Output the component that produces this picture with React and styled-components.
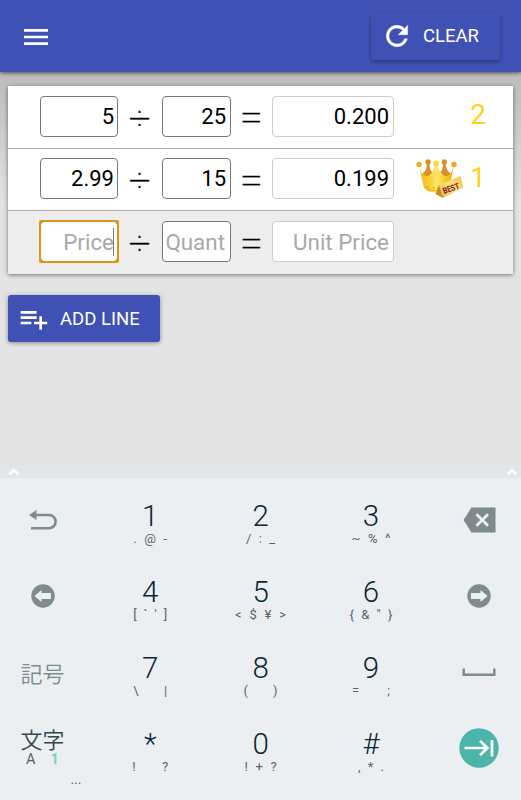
import styled, { createGlobalStyle } from "styled-components";
import { MdMenu } from "react-icons/md";

const lines = [
    { price: "5", quantity: "25", unit: "0.200", rank: "2" },
    { price: "2.99", quantity: "15", unit: "0.199", rank: "1", best: true },
    { empty: true },
];

const keyRows = [
    {
        left: <UndoIcon />,
        keys: [
            { main: "1", sub: [".", "@", "-"], width: 34 },
            { main: "2", sub: ["/", ":", "_"], width: 29 },
            { main: "3", sub: ["~", "%", "^"], width: 39 },
        ],
        right: <BackspaceIcon />,
    },
    {
        left: <ArrowIcon flip />,
        keys: [
            { main: "4", sub: ["[", "`", "'", "]"], width: 34 },
            { main: "5", sub: ["<", "$", "¥", ">"], width: 51 },
            { main: "6", sub: ["{", "&", "\"", "}"], width: 43 },
        ],
        right: <ArrowIcon />,
    },
    {
        left: <SymbolKey />,
        keys: [
            { main: "7", sub: ["\\", "|"], width: 34 },
            { main: "8", sub: ["(", ")"], width: 34 },
            { main: "9", sub: ["=", ";"], width: 38 },
        ],
        right: <SpaceIcon />,
    },
    {
        left: <ModeKey />,
        keys: [
            { main: "*", sub: ["!", "?"], width: 36 },
            { main: "0", sub: ["!", "+", "?"], width: 32 },
            { main: "#", sub: [",", "*", "."], width: 26 },
        ],
        right: <NextIcon />,
    },
];

function App(){
    return (
        <Screen>
            <GlobalStyle />
            <Header>
                <MdMenu size={32} />
                <ClearButton>
                    <RefreshIcon />
                    <span>CLEAR</span>
                </ClearButton>
            </Header>

            <Content>
                <LineCard>
                {
                    lines.map((line, index) => (
                        <LineRow key={index} $empty={line.empty}>
                            <Field $width={78} $placeholder={line.empty} $focus={line.empty}>
                                {line.empty ? "Price" : line.price}
                                {line.empty && <Caret />}
                            </Field>
                            <Divide>÷</Divide>
                            <Field $width={69} $placeholder={line.empty} $right={line.empty ? 5 : 4}>
                                {line.empty ? "Quant" : line.quantity}
                            </Field>
                            <Equal>=</Equal>
                            <Field $width={122} $placeholder={line.empty} $right={4} $result>
                                {line.empty ? "Unit Price" : line.unit}
                            </Field>
                            <RankArea>
                                {line.best && <Crown />}
                                <Rank>{line.rank}</Rank>
                            </RankArea>
                        </LineRow>
                    ))
                }
                </LineCard>
                <AddButton>
                    <AddLineIcon />
                    <span>ADD LINE</span>
                </AddButton>
            </Content>

            <Keyboard>
                <Handle>
                    <Chevron />
                    <Chevron />
                </Handle>
                {
                    keyRows.map((row, index) => (
                        <KeyRow key={index}>
                            <SideKey>{row.left}</SideKey>
                            {row.keys.map((data) => (
                                <Key key={data.main}>
                                    <KeyMain>{data.main}</KeyMain>
                                    <KeySub $width={data.width}>
                                        {data.sub.map((s) => <span key={s}>{s}</span>)}
                                    </KeySub>
                                </Key>
                            ))}
                            <SideKey $right>{row.right}</SideKey>
                        </KeyRow>
                    ))
                }
            </Keyboard>
        </Screen>
    );
}

function RefreshIcon(){
    return (
        <svg width="32" height="32" viewBox="0 0 24 24" fill="currentColor" stroke="currentColor" strokeWidth="0.3">
            <path d="M17.65 6.35A7.958 7.958 0 0 0 12 4c-4.420 0-7.990 3.580-7.990 8s3.570 8 7.990 8c3.730 0 6.840-2.550 7.730-6h-2.080A5.990 5.990 0 0 1 12 18c-3.310 0-6-2.690-6-6s2.690-6 6-6c1.660 0 3.140.69 4.220 1.780L13 11h7V4l-2.350 2.350z" />
        </svg>
    );
}

function AddLineIcon(){
    return (
        <svg width="32" height="32" viewBox="0 0 24 24" fill="currentColor">
            <path d="M14 10H2v2h12v-2zm0-4H2v2h12V6zm4 8v-4h-2v4h-4v2h4v4h2v-4h4v-2h-4zM2 16h8v-2H2v2z" />
        </svg>
    );
}

function Crown(){
    return (
        <svg width="50" height="42" viewBox="0 0 50 42">
            <defs>
                <linearGradient id="gold" x1="0" y1="0" x2="1" y2="0">
                    <stop offset="0" stopColor="#f4b61c" />
                    <stop offset="0.35" stopColor="#fbd338" />
                    <stop offset="0.5" stopColor="#ffe873" />
                    <stop offset="0.7" stopColor="#fcd22c" />
                    <stop offset="1" stopColor="#f0a818" />
                </linearGradient>
                <linearGradient id="tag" x1="0" y1="1" x2="1" y2="0">
                    <stop offset="0" stopColor="#e9b43a" />
                    <stop offset="0.5" stopColor="#f9e28a" />
                    <stop offset="1" stopColor="#f0c03c" />
                </linearGradient>
            </defs>
            <g fill="#da8f28">
                <circle cx="12" cy="4" r="2.7" />
                <circle cx="28.3" cy="4" r="2.7" />
                <path d="M11 5 H13.2 C13.5 10 15 14 18 16 L18 20 L7 20 V15 C10 13 11 9 11 5 Z M27.3 5 H29.4 C30 9 31 13 34 15 V20 H22 V16 C26 14 27 10 27.3 5 Z" />
            </g>
            <path d="M2.8 7 C4 14 7 18 11 18 C15 18 18 12 19 6 H21.5 C22.5 12 26 18 30 18 C34 18 36.5 13 37.8 7 L33.5 31 C29 36 12 36 8 30 Z" fill="url(#gold)" />
            <path d="M8.5 29 C14 34 27 34 33 29" fill="none" stroke="#e5a51c" strokeWidth="0.8" />
            <circle cx="3" cy="6.5" r="2.7" fill="#f0ad1c" />
            <circle cx="20.2" cy="5.5" r="3" fill="#fbdc48" />
            <circle cx="38" cy="6.5" r="2.7" fill="#efa91b" />
            <circle cx="12" cy="29" r="0.8" fill="#d9822b" />
            <circle cx="17.5" cy="30" r="0.8" fill="#d9822b" />
            <path d="M23 27 L19.5 36 L27 40 L29 38 Z" fill="#c98a20" />
            <path d="M23 27 L44.5 18 L47.5 29.5 L27 40 Z" fill="url(#tag)" />
            <text x="28" y="36" transform="rotate(-20 28 36)" fontFamily="Roboto, sans-serif" fontSize="8.5" fontWeight="700" fill="#7c1a16" textLength="17" lengthAdjust="spacingAndGlyphs">BEST</text>
        </svg>
    );
}

function Chevron(){
    return (
        <svg width="12" height="8" viewBox="0 0 12 8">
            <path d="M1.5 6.5 L6 2 L10.5 6.5" fill="none" stroke="#fff" strokeWidth="2.5" />
        </svg>
    );
}

function UndoIcon(){
    return (
        <svg width="28" height="20" viewBox="0 0 28 20">
            <path d="M7 5 H20 A6.6 6.6 0 0 1 20 18.2 H2" fill="none" stroke="#7f8c8e" strokeWidth="2.6" />
            <path d="M0 5 L7.5 0 V10 Z" fill="#7f8c8e" />
        </svg>
    );
}

function BackspaceIcon(){
    return (
        <svg width="33" height="26" viewBox="0 0 33 26">
            <path d="M8.5 0.5 H31.5 Q32.5 0.5 32.5 1.5 V24.5 Q32.5 25.5 31.5 25.5 H8.5 L0.5 13 Z" fill="#7f8a8e" />
            <path d="M13.5 7.3 L25 18.7 M25 7.3 L13.5 18.7" stroke="#ebeff2" strokeWidth="2.8" />
        </svg>
    );
}

function ArrowIcon({ flip }){
    return (
        <svg width="24" height="24" viewBox="0 0 24 24">
            <circle cx="12" cy="12" r="11.7" fill="#7f8c8e" />
            <path d="M4 9 H13.5 V6 L20.5 12 L13.5 18 V15 H4 Z" fill="#ebeff2" transform={flip ? "matrix(-1 0 0 1 24 0)" : undefined} />
        </svg>
    );
}

function SpaceIcon(){
    return (
        <svg width="34" height="9" viewBox="0 0 34 9">
            <path d="M1.7 0.5 V6.7 H32.3 V0.5" fill="none" stroke="#7f8c8e" strokeWidth="2.5" />
        </svg>
    );
}

function NextIcon(){
    return (
        <svg width="40" height="40" viewBox="0 0 40 40">
            <circle cx="20" cy="20" r="19.7" fill="#4bb5aa" />
            <path d="M5.5 20 H28 M21 12.7 L28.5 20 L21 27.3" fill="none" stroke="#fff" strokeWidth="2.6" />
            <path d="M33 12 V28.5" stroke="#fff" strokeWidth="2.8" />
        </svg>
    );
}

function SymbolKey(){
    return <SymbolLabel>記号</SymbolLabel>;
}

function ModeKey(){
    return (
        <ModeWrapper>
            <SymbolLabel $dark>文字</SymbolLabel>
            <ModeRow>
                <span>A</span>
                <ModeActive>1</ModeActive>
            </ModeRow>
            <ModeDots>...</ModeDots>
        </ModeWrapper>
    );
}

const GlobalStyle = createGlobalStyle`
    * {
        box-sizing: border-box;
    }
    body {
        margin: 0;
        font-family: Roboto, "Noto Sans CJK JP", sans-serif;
    }
    svg {
        display: block;
        flex-shrink: 0;
    }
`

const Screen = styled.div`
    width: 521px;
    height: 800px;
    display: flex;
    flex-direction: column;
    background-color: #e3e3e3;
    overflow: hidden;
`;

const Header = styled.div`
    height: 72px;
    flex-shrink: 0;
    padding: 2px 21px 0 20px;
    display: flex;
    align-items: center;
    justify-content: space-between;
    background-color: #3f51b5;
    color: white;
    z-index: 1;
    box-shadow: 0 1px 4px rgba(0, 0, 0, 0.6);
`;

const Button = styled.button`
    display: flex;
    align-items: center;
    height: 47px;
    border: none;
    border-radius: 3px;
    background-color: #3f51b5;
    color: white;
    font-family: inherit;
    font-size: 18.5px;
    font-weight: 400;
`;

const ClearButton = styled(Button)`
    width: 129px;
    padding: 0 0 0 10px;
    gap: 10px;
    margin-top: -2px;
    box-shadow: 0 2px 4px rgba(0, 0, 0, 0.35);
`;

const AddButton = styled(Button)`
    width: 152px;
    margin-top: 21px;
    padding: 0 0 0 10px;
    gap: 10px;
    box-shadow: 0 1px 4px rgba(0, 0, 0, 0.4);
`;

const Content = styled.div`
    height: 393px;
    flex-shrink: 0;
    padding: 14px 8px 0;
    background: linear-gradient(#bdbdbd 0, #c4c4c4 35px, #e3e3e3 130px);
`;

const LineCard = styled.div`
    height: 188px;
    background-color: white;
    border-radius: 2px;
    box-shadow: 0 1px 4px rgba(0, 0, 0, 0.5);
`;

const LineRow = styled.div`
    display: flex;
    align-items: center;
    height: 62.5px;
    padding: 0 27px 1px 32px;
    border-bottom: ${(props) => props.$empty ? "none" : "1px solid #aaa"};
    background-color: ${(props) => props.$empty ? "#ededed" : "white"};
`;

const Field = styled.div`
    position: relative;
    flex-shrink: 0;
    width: ${(props) => props.$width}px;
    height: 41px;
    padding-right: ${(props) => props.$right || 3}px;
    display: flex;
    align-items: center;
    justify-content: flex-end;
    border: 1px solid ${(props) => props.$result ? "#ccc" : "#777"};
    border-radius: 4px;
    background-color: white;
    color: ${(props) => props.$placeholder ? "#a9a9a9" : "black"};
    font-size: ${(props) => props.$placeholder ? 22.4 : 22}px;
    white-space: nowrap;

    &::after {
        content: "";
        display: ${(props) => props.$focus ? "block" : "none"};
        position: absolute;
        inset: -2px;
        border: 2px solid #e09410;
        border-radius: 2px;
    }
`;

const Caret = styled.div`
    position: absolute;
    right: 3px;
    top: 6px;
    width: 1.5px;
    height: 28px;
    background-color: #777;
`;

const Operator = styled.div`
    flex-shrink: 0;
    text-align: center;
    line-height: 40px;
    color: black;
    -webkit-text-stroke: 0.35px black;
`;

const Divide = styled(Operator)`
    width: 44px;
    padding-top: 3px;
    padding-right: 1px;
    font-family: "DejaVu Sans", sans-serif;
    font-size: 30px;
    font-weight: 200;
`;

const Equal = styled(Operator)`
    width: 41px;
    padding-top: 2px;
    font-family: Roboto, sans-serif;
    font-size: 42px;
    font-weight: 100;
`;

const RankArea = styled.div`
    flex: 1;
    display: flex;
    align-items: center;
    justify-content: flex-end;
`;

const Rank = styled.div`
    width: 20px;
    text-align: right;
    font-size: 28px;
    font-weight: 400;
    line-height: 28px;
    padding-bottom: 2px;
    color: #ffd21a;
`;

const Keyboard = styled.div`
    flex: 1;
    background-color: #ebeff2;
`;

const Handle = styled.div`
    height: 13px;
    padding: 0 3px 0 8px;
    display: flex;
    align-items: center;
    justify-content: space-between;
    background-color: #e2e6e9;
`;

const KeyRow = styled.div`
    display: grid;
    grid-template-columns: 95px repeat(3, 110.4px) 1fr;
    height: 76px;
    padding-top: 4px;
`;

const Key = styled.div`
    display: flex;
    flex-direction: column;
    align-items: center;
    padding-top: 18px;
`;

const KeyMain = styled.div`
    font-size: 29.5px;
    line-height: 32px;
    font-weight: 300;
    color: #0a2732;
`;

const KeySub = styled.div`
    width: ${(props) => props.$width}px;
    margin-top: -1px;
    display: flex;
    justify-content: space-between;
    font-size: 13px;
    line-height: 16px;
    color: #56646a;
`;

const SideKey = styled.div`
    display: flex;
    align-items: center;
    justify-content: center;
    height: 76px;
    padding-right: ${(props) => props.$right ? 0 : 10}px;
    padding-left: ${(props) => props.$right ? 11 : 0}px;
`;

const SymbolLabel = styled.div`
    font-family: "Noto Sans CJK JP", sans-serif;
    font-size: 22px;
    line-height: 24px;
    font-weight: 350;
    color: ${(props) => props.$dark ? "#37474f" : "#7f8c8e"};
`;

const ModeWrapper = styled.div`
    position: relative;
    display: flex;
    flex-direction: column;
    align-items: center;
    margin-bottom: 1px;
`;

const ModeRow = styled.div`
    display: flex;
    gap: 15px;
    font-size: 14.5px;
    line-height: 20px;
    color: #55636a;
`;

const ModeActive = styled.span`
    font-weight: 700;
    color: #80cbc4;
`;

const ModeDots = styled.div`
    position: absolute;
    right: -17px;
    bottom: -17px;
    font-size: 14px;
    color: #55636a;
`;

export default App;
